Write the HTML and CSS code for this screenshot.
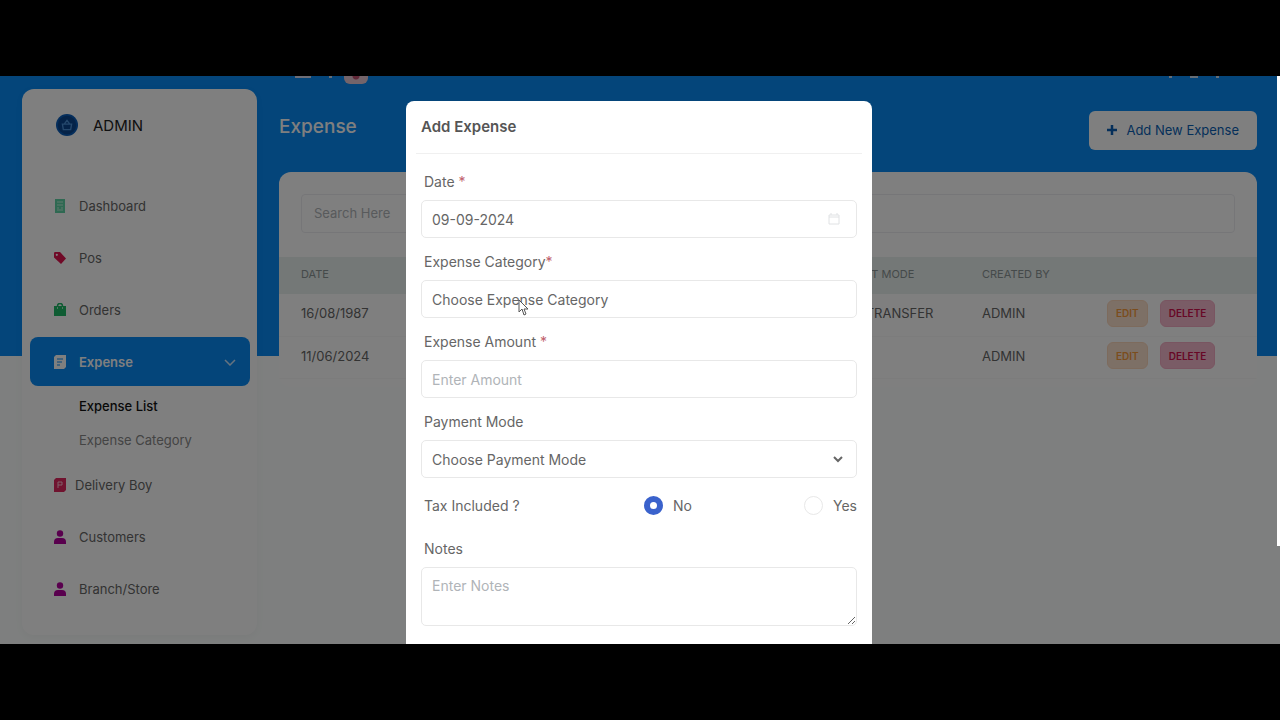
FILE: index.html
```html
<!DOCTYPE html>
<html lang="en">
<head>
    <meta charset="UTF-8">
    <meta name="viewport" content="width=device-width, initial-scale=1.0">
    <title>Expense</title>
    <link rel="stylesheet" href="styles.css">
</head>
<body>
    <div class="screen">
        <aside class="sidebar">
            <div class="brand">
                <svg class="brand-logo" viewBox="0 0 24 24">
                    <circle cx="12" cy="12" r="12" fill="#0a5cb8"/>
                    <circle cx="12" cy="12" r="10" fill="#0a4690"/>
                    <path d="M7 11h10l-1 6H8zM9 11l3-4 3 4" fill="none" stroke="#4a90d8" stroke-width="1.5"/>
                </svg>
                <span>ADMIN</span>
            </div>
            <nav class="menu">
                <a href="#" class="menu-link">
                    <svg class="icon" viewBox="0 0 12 14"><path d="M1 0h10v14H1z" fill="#5fd3a4"/><path d="M3 3h6M3 6h6M3 9h2M7 9h2M3 11h6" stroke="#c4f0de"/></svg>
                    Dashboard
                </a>
                <a href="#" class="menu-link">
                    <svg class="icon" viewBox="0 0 12 14"><path d="M0 2.200Q0 1 1.200 1H6l6 6.500-5 5.500L0 6.500z" fill="#e0134f"/><circle cx="2.800" cy="3.800" r="1.100" fill="#fff"/></svg>
                    Pos
                </a>
                <a href="#" class="menu-link">
                    <svg class="icon" viewBox="0 0 12 14"><path d="M0 3h12v10H0z" fill="#1fb866"/><path d="M3.500 6V3a2.500 2.500 0 0 1 5 0v3" fill="none" stroke="#1fb866" stroke-width="1.500"/><path d="M3.500 4v2M8.500 4v2" stroke="#a5e8c4"/></svg>
                    Orders
                </a>
                <a href="#" class="menu-link active">
                    <svg class="icon" viewBox="0 0 12 14"><path d="M2 0h10v12l-2 2H0V2z" fill="#fff"/><path d="M3 4h6M3 7h5M3 10h3" stroke="#088af4"/></svg>
                    Expense
                    <svg class="chevron" viewBox="0 0 12 8"><path d="M1 2l5 5 5-5" fill="none" stroke="#cde7ff" stroke-width="1.500"/></svg>
                </a>
                <div class="submenu">
                    <a href="#" class="current">Expense List</a>
                    <a href="#">Expense Category</a>
                </div>
                <a href="#" class="menu-link tight">
                    <svg class="icon" viewBox="0 0 12 14"><path d="M2 0h10v12l-2 2H0V2z" fill="#e0265f"/><path d="M4 10V4h4v3H4" fill="none" stroke="#ffc2d4"/></svg>
                    Delivery Boy
                </a>
                <a href="#" class="menu-link">
                    <svg class="icon" viewBox="0 0 12 14"><circle cx="6" cy="3.500" r="3.200" fill="#b3009c"/><path d="M0 14v-2q0-4 4-4h4q4 0 4 4v2z" fill="#b3009c"/></svg>
                    Customers
                </a>
                <a href="#" class="menu-link">
                    <svg class="icon" viewBox="0 0 12 14"><circle cx="6" cy="3.500" r="3.200" fill="#b3009c"/><path d="M0 14v-2q0-4 4-4h4q4 0 4 4v2z" fill="#b3009c"/></svg>
                    Branch/Store
                </a>
            </nav>
        </aside>

        <main class="content">
            <div class="topbar">
                <span class="burger"></span>
                <span class="dot"></span>
                <span class="flag"></span>
                <span class="dot push"></span>
                <span class="dot wide"></span>
                <span class="dot"></span>
            </div>
            <div class="page-head">
                <h1>Expense</h1>
                <button type="button" class="add-btn">
                    <svg viewBox="0 0 10 10"><path d="M5 0v10M0 5h10" stroke="#0a5fb4" stroke-width="2.500"/></svg>
                    Add New Expense
                </button>
            </div>
            <section class="card">
                <div class="search">
                    <input type="text" placeholder="Search Here" aria-label="Search">
                </div>
                <table>
                    <colgroup>
                        <col>
                        <col class="col-mode">
                        <col class="col-user">
                        <col class="col-actions">
                    </colgroup>
                    <thead>
                        <tr><th>DATE</th><th>PAYMENT MODE</th><th>CREATED BY</th><th></th></tr>
                    </thead>
                    <tbody>
                        <tr>
                            <td>16/08/1987</td>
                            <td>BANK TRANSFER</td>
                            <td>ADMIN</td>
                            <td><div class="actions"><button type="button" class="edit">EDIT</button><button type="button" class="delete">DELETE</button></div></td>
                        </tr>
                        <tr>
                            <td>11/06/2024</td>
                            <td></td>
                            <td>ADMIN</td>
                            <td><div class="actions"><button type="button" class="edit">EDIT</button><button type="button" class="delete">DELETE</button></div></td>
                        </tr>
                    </tbody>
                </table>
            </section>
        </main>

        <div class="overlay">
            <form class="modal">
                <h2>Add Expense</h2>
                <div class="modal-body">
                    <div class="field">
                        <label for="date">Date <span class="req">*</span></label>
                        <div class="control">
                            <input type="text" id="date" value="09-09-2024">
                            <svg class="calendar" viewBox="0 0 12 12"><path d="M1 2h10v9H1zM1 4h10M3 0v2M9 0v2" fill="none" stroke="#e0e2e4"/></svg>
                        </div>
                    </div>
                    <div class="field">
                        <label for="category">Expense Category<span class="req">*</span></label>
                        <select id="category">
                            <option>Choose Expense Category</option>
                        </select>
                    </div>
                    <div class="field">
                        <label for="amount">Expense Amount <span class="req">*</span></label>
                        <input type="text" id="amount" placeholder="Enter Amount">
                    </div>
                    <div class="field">
                        <label for="mode">Payment Mode</label>
                        <div class="control">
                            <select id="mode">
                                <option>Choose Payment Mode</option>
                            </select>
                            <svg class="arrow" viewBox="0 0 12 8"><path d="M2 1l4 4 4-4" fill="none" stroke="#666" stroke-width="2"/></svg>
                        </div>
                    </div>
                    <div class="tax-row">
                        <span class="tax-title">Tax Included ?</span>
                        <label class="radio"><input type="radio" name="tax" checked> No</label>
                        <label class="radio"><input type="radio" name="tax"> Yes</label>
                    </div>
                    <div class="field">
                        <label for="notes">Notes</label>
                        <textarea id="notes" placeholder="Enter Notes"></textarea>
                    </div>
                </div>
            </form>
        </div>

        <div class="scroll-thumb"></div>
        <svg class="cursor" viewBox="0 0 11 17"><path d="M1 1v12l3-3 2 6 2-1-2-5h4z" fill="#fff" stroke="#555"/></svg>
    </div>
</body>
</html>
```

FILE: styles.css
```css
* {
    box-sizing: border-box;
}
body {
    margin: 0;
    padding: 76px 0;
    height: 100vh;
    background: #000;
    font-family: Inter, 'Open Sans', sans-serif;
    font-size: 13px;
    color: #666;
}
a {
    color: inherit;
    text-decoration: none;
}
button, input, select, textarea {
    font: inherit;
    color: inherit;
}
.screen {
    position: relative;
    display: flex;
    gap: 22px;
    height: 100%;
    padding: 0 23px 0 22px;
    overflow: hidden;
    background: linear-gradient(#088af4 280px, #fcfffe 280px);
}

/* Sidebar */
.sidebar {
    flex: 0 0 235px;
    align-self: flex-start;
    margin-top: 13px;
    padding-bottom: 22px;
    background: #fff;
    border-radius: 12px;
    box-shadow: 0 2px 8px rgba(0, 0, 0, 0.04);
}
.brand {
    display: flex;
    align-items: center;
    gap: 15px;
    height: 92px;
    padding: 0 34px 20px;
    font-size: 15px;
    color: #222;
}
.brand-logo {
    width: 22px;
    height: 22px;
}
.menu {
    display: flex;
    flex-direction: column;
    gap: 3px;
    padding: 0 7px 0 8px;
}
.menu-link {
    display: flex;
    align-items: center;
    gap: 13px;
    height: 49px;
    padding: 0 14px 0 24px;
    border-radius: 8px;
}
.menu-link.tight {
    gap: 9px;
}
.menu-link.active {
    background: #088af4;
    color: #fff;
    font-weight: 600;
}
.icon {
    width: 12px;
    height: 14px;
}
.chevron {
    width: 12px;
    height: 8px;
    margin-left: auto;
}
.submenu {
    display: flex;
    flex-direction: column;
    padding-left: 49px;
    line-height: 34px;
}
.submenu a {
    color: #888;
}
.submenu .current {
    color: #111;
    font-weight: 500;
}

/* Content */
.content {
    flex: 1;
    min-width: 0;
}
.topbar {
    display: flex;
    align-items: flex-start;
    gap: 18px;
    height: 8px;
    padding: 0 38px 0 16px;
}
.burger {
    width: 16px;
    height: 2px;
    background: #dde;
}
.dot {
    width: 3px;
    height: 2px;
    background: #cde;
}
.dot.wide {
    width: 8px;
}
.dot.push {
    margin-left: auto;
}
.flag {
    width: 24px;
    height: 8px;
    margin-left: -6px;
    border-radius: 0 0 6px 6px;
    background: radial-gradient(circle at 50% 0, #c25070 3px, #e8c8d4 4px);
}
.page-head {
    display: flex;
    align-items: center;
    justify-content: space-between;
    padding: 27px 0 22px;
}
h1 {
    margin: 0 0 8px;
    font-size: 19px;
    font-weight: 500;
    color: #fff;
}
.add-btn {
    display: flex;
    align-items: center;
    gap: 9px;
    height: 39px;
    padding: 0 18px 2px;
    border: 0;
    border-radius: 6px;
    background: #fff;
    color: #0a5fb4;
}
.add-btn svg {
    width: 10px;
    height: 10px;
}
.card {
    padding-bottom: 8px;
    overflow: hidden;
    background: #fff;
    border-radius: 12px;
}
.search {
    padding: 22px 22px 24px;
}
.search input {
    width: 100%;
    height: 39px;
    padding: 0 12px 2px;
    border: 1px solid #ececf0;
    border-radius: 4px;
    background: #fff;
}
input::placeholder, textarea::placeholder {
    color: #b0b4b8;
}
table {
    width: 100%;
    border-collapse: collapse;
    table-layout: fixed;
}
.col-mode {
    width: 156px;
}
.col-user {
    width: 125px;
}
.col-actions {
    width: 172px;
}
th, td {
    padding: 0 0 3px 22px;
    text-align: left;
    white-space: nowrap;
}
th {
    height: 37px;
    background: #e8f0ee;
    font-size: 11px;
    font-weight: 400;
    color: #8a9494;
}
td {
    height: 42px;
    border-bottom: 1px solid #f8f8f8;
}
.actions {
    display: flex;
    gap: 12px;
}
.actions button {
    height: 27px;
    padding: 0 8px;
    border: 1px solid #f2aac2;
    border-radius: 6px;
    font-size: 10px;
    font-weight: 600;
}
.actions .edit {
    background: #fbe0cc;
    border-color: #fbd6bb;
    color: #f79a3a;
}
.actions .delete {
    background: #f5b8cc;
    color: #d0104c;
}

/* Modal */
.overlay {
    position: absolute;
    inset: 0;
    display: flex;
    justify-content: center;
    align-items: flex-start;
    padding: 25px 2px 0 0;
    background: rgba(0, 0, 0, 0.5);
}
.modal {
    width: 466px;
    padding: 0 10px 40px;
    background: #fff;
    border-radius: 8px;
    font-size: 14px;
}
h2 {
    margin: 0;
    padding: 0 5px;
    border-bottom: 1px solid #f0f0f0;
    font-size: 15px;
    font-weight: 600;
    line-height: 52px;
    color: #555;
}
.modal-body {
    padding: 19px 5px 0;
}
.field {
    margin-bottom: 15px;
}
.field label {
    display: block;
    margin-bottom: 9px;
    padding-left: 3px;
    line-height: 18px;
}
.req {
    color: #c0606c;
}
.control {
    position: relative;
}
.field input, .field select, .field textarea {
    display: block;
    width: 100%;
    height: 38px;
    padding: 0 10px;
    appearance: none;
    border: 1px solid #e8e8e8;
    border-radius: 5px;
    background: #fff;
}
.field textarea {
    height: 59px;
    padding: 9px 10px;
}
.calendar {
    position: absolute;
    top: 13px;
    right: 17px;
    width: 12px;
    height: 12px;
}
.arrow {
    position: absolute;
    top: 16px;
    right: 13px;
    width: 12px;
    height: 8px;
}
.tax-row {
    display: flex;
    align-items: center;
    height: 20px;
    margin: 17px 0 25px;
    padding-left: 3px;
}
.tax-title {
    width: 220px;
}
.radio {
    display: flex;
    align-items: center;
    gap: 10px;
}
.radio + .radio {
    margin-left: auto;
}
.radio input {
    appearance: none;
    width: 19px;
    height: 19px;
    margin: 0;
    border: 1px solid #e8e8e8;
    border-radius: 50%;
}
.radio input:checked {
    border: 6px solid #3a62cc;
}

.scroll-thumb {
    position: absolute;
    top: 0;
    right: 0;
    width: 3px;
    height: 470px;
    background: #fff;
}
.cursor {
    position: absolute;
    top: 223px;
    left: 518px;
    width: 11px;
    height: 17px;
}
```
